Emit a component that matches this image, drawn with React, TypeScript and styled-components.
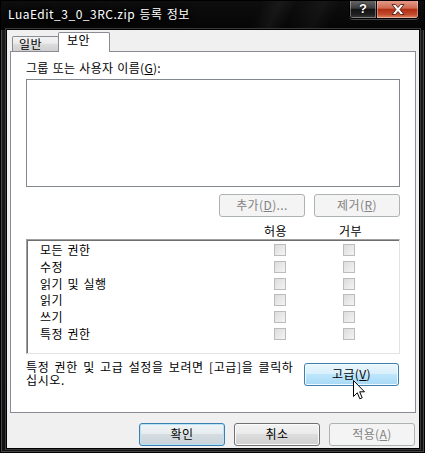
import React from 'react';
import styled, { createGlobalStyle, css } from 'styled-components';

const font = `"Noto Sans CJK KR", "Noto Sans", sans-serif`;

const GlobalStyle = createGlobalStyle`
  html, body {
    margin: 0;
    padding: 0;
    background: #fff;
  }
  body {
    font-family: ${font};
  }
`;

type Variant = 'normal' | 'default' | 'hot' | 'disabled';

const Window = styled.div`
  position: relative;
  box-sizing: border-box;
  width: 425px;
  height: 453px;
  display: flex;
  flex-direction: column;
  border: 1px solid #000;
  background: linear-gradient(#1c1c1c, #121212);
  box-shadow: inset 0 0 0 1px #474747;
  font-family: ${font};
  font-size: 12px;
  letter-spacing: 0.4px;
  word-spacing: 1.5px;
  color: #000;
  overflow: hidden;
`;

const TitleBar = styled.div`
  display: flex;
  align-items: flex-start;
  height: 29px;
  flex-shrink: 0;
  background:
    linear-gradient(115deg, transparent 60%, rgba(255, 255, 255, 0.05) 64%, transparent 68%, rgba(255, 255, 255, 0.04) 74%, transparent 78%),
    linear-gradient(#0e0e0e, #050505);
`;

const Title = styled.div`
  padding: 4px 0 0 7px;
  color: #fff;
  font-size: 12px;
  line-height: 18px;
  letter-spacing: 0.5px;
  word-spacing: 1px;
  white-space: nowrap;
  text-shadow: 0 0 6px #000, 0 0 3px #000;
`;

const Controls = styled.div`
  display: flex;
  margin: -1px 5px 0 auto;
  border: 1px solid #000;
  border-top: none;
  border-radius: 0 0 4px 4px;
  overflow: hidden;
  box-shadow: 0 1px 0 rgba(255, 255, 255, 0.25);
`;

const CaptionButton = styled.div<{ $close?: boolean }>`
  display: flex;
  align-items: center;
  justify-content: center;
  box-sizing: border-box;
  height: 18px;
  width: ${p => (p.$close ? 41 : 27)}px;
  color: #fff;
  font: bold 13px/18px "Liberation Sans", sans-serif;
  letter-spacing: 0;
  text-shadow: 0 0 2px #000, 0 0 1px #000;
  box-shadow: inset 0 0 0 1px rgba(255, 255, 255, 0.35);
  ${p =>
    p.$close
      ? css`
          background: linear-gradient(#e7a08f 0%, #cf6a52 45%, #b22f14 52%, #c24a2d 80%, #e08a68 100%);
        `
      : css`
          border-right: 1px solid #000;
          background: linear-gradient(#6a6a6a 0%, #3d3d3d 45%, #141414 52%, #1f1f1f 80%, #3c3c3c 100%);
        `}
`;

const Body = styled.div`
  display: flex;
  flex-direction: column;
  width: 412px;
  height: 418px;
  box-sizing: border-box;
  margin-left: 6px;
  padding: 3px 3px 0;
  background: #f0f0f0;
  box-shadow: 0 0 0 1px #000, 0 0 0 2px #3a3a3a;
`;

const TabStrip = styled.div`
  display: flex;
  align-items: flex-end;
  height: 19px;
  padding-left: 2px;
  position: relative;
  z-index: 1;
  margin-bottom: -1px;
`;

const Tab = styled.div<{ $active?: boolean }>`
  box-sizing: border-box;
  border: 1px solid #898c95;
  border-bottom: none;
  border-radius: 2px 2px 0 0;
  white-space: nowrap;
  ${p =>
    p.$active
      ? css`
          width: 52px;
          height: 20px;
          margin-left: -1px;
          padding-left: 8px;
          line-height: 14px;
          background: #fff;
        `
      : css`
          width: 47px;
          height: 15px;
          margin-bottom: 1px;
          padding-left: 6px;
          line-height: 13px;
          background: linear-gradient(#f3f3f3 0%, #ebebeb 45%, #dcdcdc 50%, #cfcfcf 100%);
        `}
`;

const Panel = styled.div`
  box-sizing: border-box;
  height: 362px;
  border: 1px solid #898c95;
  background: #fff;
  padding: 8px 15px 0;
  display: flex;
  flex-direction: column;
`;

const Label = styled.div`
  height: 15px;
  line-height: 15px;
  letter-spacing: 0.3px;
  word-spacing: 1px;
  white-space: nowrap;
`;

const ListBox = styled.div`
  margin-top: 4px;
  height: 108px;
  box-sizing: border-box;
  border: 1px solid #828790;
  background: #fff;
`;

const ButtonRow = styled.div<{ $top: number }>`
  display: flex;
  justify-content: flex-end;
  gap: 9px;
  margin-top: ${p => p.$top}px;
`;

const Button = styled.div<{ $variant?: Variant; $width?: number }>`
  position: relative;
  box-sizing: border-box;
  width: ${p => p.$width ?? 86}px;
  height: 23px;
  border: 1px solid #707070;
  border-radius: 3px;
  text-align: center;
  line-height: 20px;
  white-space: nowrap;
  color: #000;
  background: linear-gradient(#f2f2f2 0%, #ebebeb 45%, #dddddd 50%, #cfcfcf 100%);
  box-shadow: inset 0 0 0 1px #fbfbfb;
  ${p =>
    p.$variant === 'disabled' &&
    css`
      border-color: #adb2b5;
      background: #f4f4f4;
      color: #838383;
      box-shadow: none;
    `}
  ${p =>
    p.$variant === 'default' &&
    css`
      border-color: #3c7fb1;
      box-shadow: inset 0 0 0 1px #b9e3f7;
      background: linear-gradient(#eef3f6 0%, #e6ecef 45%, #d5dde2 50%, #c8d2d8 100%);
    `}
  ${p =>
    p.$variant === 'hot' &&
    css`
      border-color: #3c7fb1;
      box-shadow: inset 0 0 0 1px #f3fbfe;
      background: linear-gradient(#eaf6fd 0%, #d9f0fc 45%, #bee6fd 50%, #a7d9f5 100%);
    `}
`;

const HeaderRow = styled.div`
  display: grid;
  grid-template-columns: 1fr 75px 75px 12px;
  margin-top: 6px;
  height: 16px;
  line-height: 16px;
  text-align: center;
`;

const PermList = styled.div`
  height: 115px;
  box-sizing: border-box;
  border-style: solid;
  border-width: 1px;
  border-color: #a0a0a0 #e3e3e3 #e3e3e3 #a0a0a0;
  box-shadow: inset 1px 1px 0 #6f6f6f;
  padding-top: 2px;
  background: #fff;
`;

const PermRow = styled.div`
  display: grid;
  grid-template-columns: 1fr 69px 69px 16px;
  align-items: center;
  height: 16.67px;
  line-height: 16px;
  padding-left: 13px;
`;

const Check = styled.div`
  justify-self: center;
  box-sizing: border-box;
  width: 12px;
  height: 12px;
  border: 1px solid #bcbcbc;
  background: linear-gradient(135deg, #dcdcdc, #f4f4f4);
`;

const BottomRow = styled.div`
  display: flex;
  justify-content: space-between;
  align-items: flex-start;
  margin-top: 6px;
`;

const Hint = styled.div`
  line-height: 13px;
  letter-spacing: 0.6px;
  word-spacing: 2px;
  white-space: nowrap;
`;

const AdvancedWrap = styled.div`
  margin: 3px 1px 0 0;
`;

const Cursor = styled.svg`
  position: absolute;
  left: 48px;
  top: 16px;
  overflow: visible;
`;

const Footer = styled.div`
  display: flex;
  justify-content: flex-end;
  gap: 9px;
  margin-top: 10px;
  padding-right: 1px;
`;

const permissions = ['모든 권한', '수정', '읽기 및 실행', '읽기', '쓰기', '특정 권한'];

const App: React.FC = () => {
  return (
    <>
      <GlobalStyle />
      <Window>
        <TitleBar>
          <Title>LuaEdit_3_0_3RC.zip 등록 정보</Title>
          <Controls>
            <CaptionButton>?</CaptionButton>
            <CaptionButton $close>
              <svg width="14" height="11" viewBox="0 0 14 11">
                <path
                  d="M1 0.5 H4.5 L7 3.5 L9.5 0.5 H13 L9 5.5 L13 10.5 H9.5 L7 7.5 L4.5 10.5 H1 L5 5.5 Z"
                  fill="#fff"
                  stroke="#3a0d04"
                  strokeWidth="0.8"
                  strokeLinejoin="round"
                />
              </svg>
            </CaptionButton>
          </Controls>
        </TitleBar>

        <Body>
          <TabStrip>
            <Tab>일반</Tab>
            <Tab $active>보안</Tab>
          </TabStrip>

          <Panel>
            <Label>
              그룹 또는 사용자 이름(<u>G</u>):
            </Label>
            <ListBox />

            <ButtonRow $top={7}>
              <Button $variant="disabled">
                추가(<u>D</u>)...
              </Button>
              <Button $variant="disabled">
                제거(<u>R</u>)
              </Button>
            </ButtonRow>

            <HeaderRow>
              <span />
              <span>허용</span>
              <span>거부</span>
              <span />
            </HeaderRow>
            <PermList>
              {permissions.map(name => (
                <PermRow key={name}>
                  <span>{name}</span>
                  <Check />
                  <Check />
                  <span />
                </PermRow>
              ))}
            </PermList>

            <BottomRow>
              <Hint>
                특정 권한 및 고급 설정을 보려면 [고급]을 클릭하
                <br />
                십시오.
              </Hint>
              <AdvancedWrap>
                <Button $variant="hot" $width={95}>
                  고급(<u>V</u>)
                  <Cursor width="12" height="20" viewBox="0 0 12 20">
                    <path
                      d="M0.5 0.5 V16.5 L4.3 12.8 L6.8 18.8 L9.2 17.8 L6.7 11.8 H11.5 Z"
                      fill="#fff"
                      stroke="#000"
                      strokeWidth="1"
                      strokeLinejoin="miter"
                    />
                  </Cursor>
                </Button>
              </AdvancedWrap>
            </BottomRow>
          </Panel>

          <Footer>
            <Button $variant="default">확인</Button>
            <Button>취소</Button>
            <Button $variant="disabled">
              적용(<u>A</u>)
            </Button>
          </Footer>
        </Body>
      </Window>
    </>
  );
};

export default App;
